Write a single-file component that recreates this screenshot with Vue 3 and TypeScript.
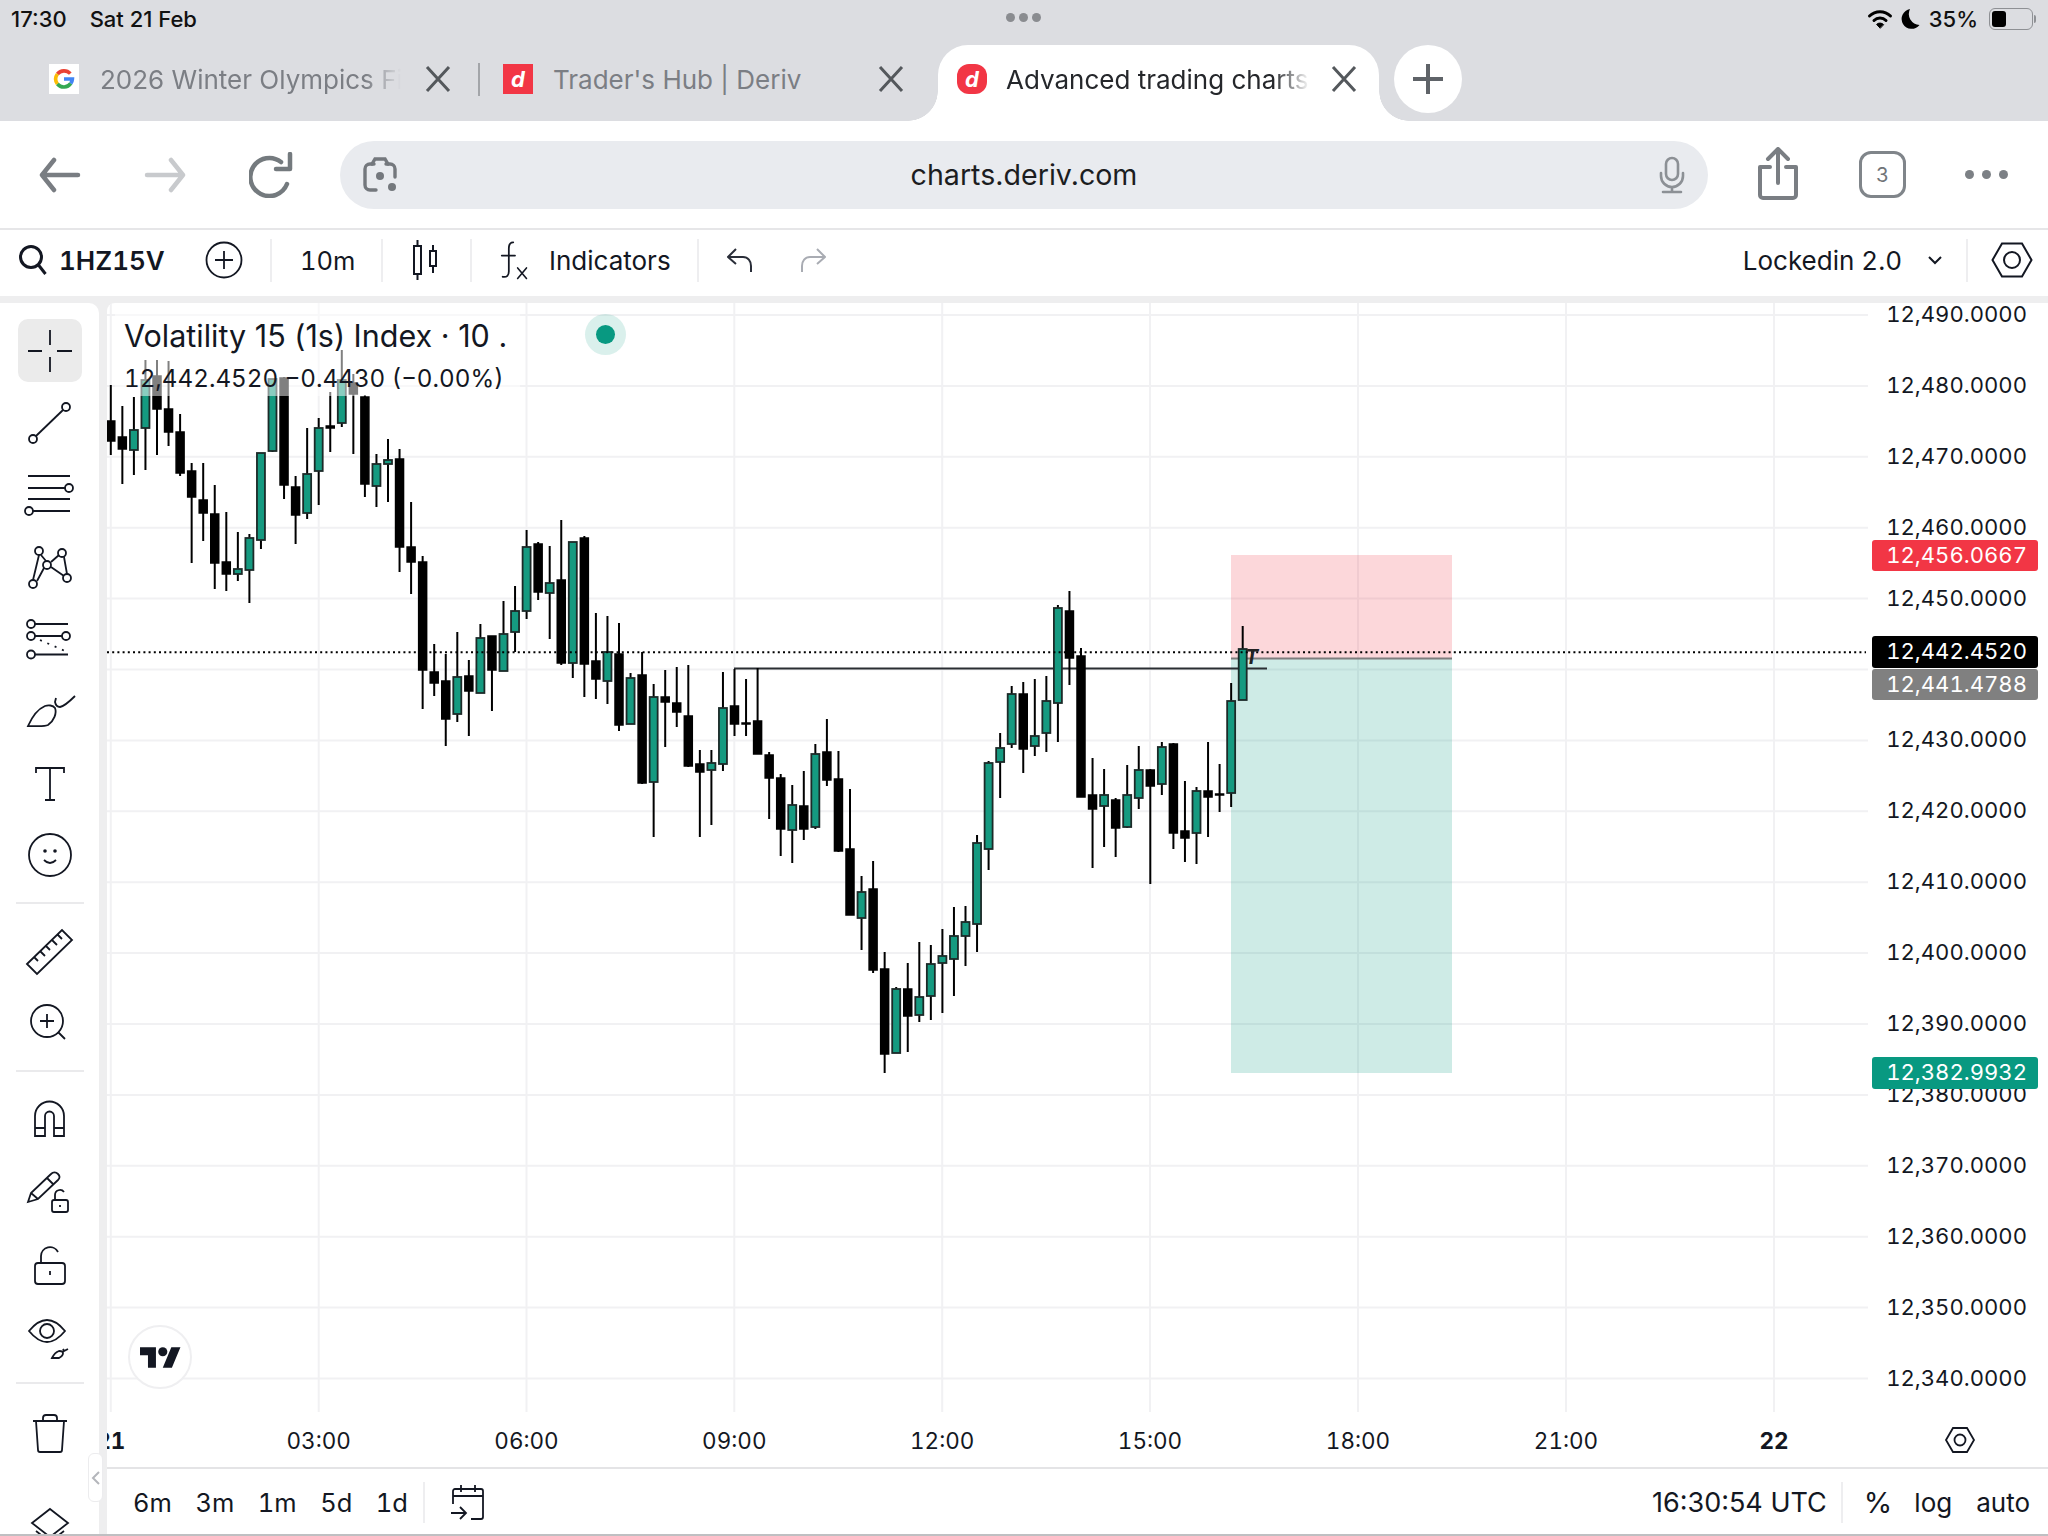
<script setup lang="ts">
type Raw = [number, number, number, number, 0 | 1]

// wick top, body top, body bottom, wick bottom, up(1)/down(0), in page pixels
const raw: Raw[] = [
  [385,421,441,455,0],[406,437,449,484,0],[397,430,450,475,1],[360,380,428,470,1],[360,376,409,455,0],
  [361,409,432,446,0],[414,432,473,476,0],[463,471,497,563,0],[463,500,513,541,0],[485,514,563,589,0],
  [512,562,574,591,0],[532,569,574,581,1],[534,538,570,603,1],[453,453,540,549,1],[379,379,451,452,1],
  [377,378,485,499,0],[476,487,515,544,0],[428,474,513,519,1],[418,428,471,505,1],[392,426,428,452,0],
  [350,380,423,427,1],[374,383,394,454,0],[395,397,484,497,0],[454,464,486,507,1],[439,460,464,502,1],
  [449,459,547,572,0],[502,547,562,594,0],[556,562,670,709,0],[644,672,683,696,0],[654,681,719,746,0],
  [632,677,714,722,1],[660,676,691,736,0],[624,638,693,693,1],[636,636,670,711,0],[601,634,671,671,1],
  [586,611,632,652,1],[530,547,611,619,1],[542,544,592,600,0],[546,583,593,639,1],[520,580,663,665,0],
  [542,542,663,678,1],[536,538,664,697,0],[613,661,679,699,0],[616,652,681,704,1],[623,654,725,731,0],
  [673,678,724,724,1],[652,675,783,784,0],[684,697,782,837,1],[670,697,702,747,0],[667,703,712,727,0],
  [665,716,766,767,0],[750,764,772,837,0],[750,763,770,825,1],[672,708,764,771,1],[669,706,724,736,0],
  [679,723,724,736,0],[668,721,754,754,0],[752,755,778,819,0],[774,778,829,856,0],[785,805,830,863,1],
  [771,806,829,840,0],[744,754,827,829,1],[719,752,780,786,0],[751,779,851,852,0],[789,849,915,915,0],
  [876,892,918,950,1],[861,889,970,973,0],[952,969,1054,1073,0],[987,989,1053,1053,1],[963,989,1016,1052,0],
  [942,997,1015,1022,1],[945,964,996,1020,1],[929,956,963,1013,1],[907,936,959,996,1],[906,922,936,966,1],
  [835,843,924,952,1],[761,763,849,870,1],[733,748,762,798,1],[686,694,744,748,1],[682,694,749,773,0],
  [679,736,746,756,1],[676,701,733,752,1],[605,608,703,742,1],[591,611,658,685,0],[648,656,797,797,0],
  [758,795,809,868,0],[769,795,806,847,1],[798,800,828,857,0],[765,795,827,828,1],[746,770,798,809,1],
  [769,770,786,884,0],[742,747,784,795,1],[743,744,833,849,0],[781,831,838,862,0],[787,791,833,864,1],
  [742,791,797,837,0],[764,794,795,812,0],[683,701,793,807,1],[626,649,700,700,1],
]

const candles = raw.map((c, i) => ({
  x: 110.8 + 11.55 * i,
  wickTop: c[0],
  top: c[1],
  height: Math.max(c[2] - c[1], 1),
  wickBot: c[3],
  up: c[4] === 1,
}))

const priceRows = Array.from({ length: 16 }, (_, i) => ({
  y: 315 + 70.9 * i,
  label: `12,${490 - i * 10}.0000`,
}))
// 12,440 sits behind the last-price tags
const priceLabels = priceRows.filter((r) => r.label !== '12,440.0000')

const timeLabels = [
  { x: 110.8, label: '21', bold: true },
  { x: 318.7, label: '03:00', bold: false },
  { x: 526.5, label: '06:00', bold: false },
  { x: 734.3, label: '09:00', bold: false },
  { x: 942.2, label: '12:00', bold: false },
  { x: 1150, label: '15:00', bold: false },
  { x: 1358, label: '18:00', bold: false },
  { x: 1566, label: '21:00', bold: false },
  { x: 1774, label: '22', bold: true },
]

const priceTags = [
  { y: 540, h: 31, fill: '#f23645', label: '12,456.0667' },
  { y: 636, h: 32, fill: '#000000', label: '12,442.4520' },
  { y: 669, h: 31, fill: '#808080', label: '12,441.4788' },
  { y: 1057, h: 32, fill: '#089981', label: '12,382.9932' },
]

const ranges = ['6m', '3m', '1m', '5d', '1d']
</script>

<template>
  <div class="page">
    <header class="browser-top">
      <div class="status-bar">
        <span class="clock">17:30</span>
        <span class="date">Sat 21 Feb</span>
        <span class="centre-dots"><i></i><i></i><i></i></span>
        <span class="status-right">
          <svg width="26" height="22" viewBox="0 0 26 22" fill="none" stroke="#000" stroke-width="3" stroke-linecap="round">
            <path d="M2.5 8a15 15 0 0 1 21 0" />
            <path d="M7 12.5a8.5 8.5 0 0 1 12 0" />
            <path d="M13 20l-3.4-3.6a4.8 4.8 0 0 1 6.8 0z" fill="#000" stroke-width="1" />
          </svg>
          <svg class="moon" width="20" height="24" viewBox="0 0 20 24">
            <path d="M9 2a10 10 0 1 0 9.5 16A11 11 0 0 1 9 2z" fill="#000" />
          </svg>
          <span class="batt-pct">35%</span>
          <span class="battery"><i></i></span>
          <span class="battery-cap"></span>
        </span>
      </div>

      <div class="tab-row">
        <div class="tab tab-first">
          <svg class="favicon" width="30" height="30" viewBox="0 0 30 30">
            <rect width="30" height="30" fill="#fff" />
            <g fill="none" stroke-width="3.6">
              <path d="M21.3 9.6A8.5 8.5 0 0 0 8.4 10" stroke="#ea4335" />
              <path d="M8.4 10a8.5 8.5 0 0 0 0 10" stroke="#fbbc05" />
              <path d="M8.4 20a8.5 8.5 0 0 0 13.4-.6" stroke="#34a853" />
              <path d="M21.8 19.4A8.5 8.5 0 0 0 23.4 15H15" stroke="#4285f4" />
            </g>
          </svg>
          <span class="tab-title fade">2026 Winter Olympics Finals</span>
          <svg class="tab-close" width="28" height="28" viewBox="0 0 28 28"><path d="M3 2l22 24M25 2L3 26" /></svg>
        </div>
        <span class="tab-sep"></span>
        <div class="tab tab-second">
          <span class="deriv-icon">d</span>
          <span class="tab-title">Trader's Hub | Deriv</span>
          <svg class="tab-close" width="28" height="28" viewBox="0 0 28 28"><path d="M3 2l22 24M25 2L3 26" /></svg>
        </div>
        <div class="tab tab-active">
          <span class="deriv-icon round">d</span>
          <span class="tab-title fade">Advanced trading charts</span>
          <svg class="tab-close" width="28" height="28" viewBox="0 0 28 28"><path d="M3 2l22 24M25 2L3 26" /></svg>
        </div>
        <button class="new-tab">
          <svg width="34" height="34" viewBox="0 0 34 34"><path d="M17 2v30M2 17h30" stroke="#5f6368" stroke-width="4" /></svg>
        </button>
      </div>
    </header>

    <div class="url-row">
      <svg class="nav-icon" width="42" height="36" viewBox="0 0 42 36" fill="none" stroke="#797d82" stroke-width="4.5" stroke-linecap="round" stroke-linejoin="round">
        <path d="M39 18H3M15 3L3 18l12 15" />
      </svg>
      <svg class="nav-icon" width="42" height="36" viewBox="0 0 42 36" fill="none" stroke="#c8cacd" stroke-width="4.5" stroke-linecap="round" stroke-linejoin="round">
        <path d="M3 18h36M27 3l12 15-12 15" />
      </svg>
      <svg class="nav-icon" width="44" height="46" viewBox="0 0 44 46" fill="none" stroke="#747a7e" stroke-width="4.5" stroke-linecap="round">
        <path d="M38 32a19 19 0 1 1-6-22" />
        <path d="M41 2v15H27" stroke-linejoin="round" />
      </svg>
      <div class="url-field">
        <svg class="lens" width="36" height="38" viewBox="0 0 36 38" fill="none" stroke="#74787d" stroke-width="3.4" stroke-linecap="round">
          <path d="M10 8l3-5h10l3 5" />
          <path d="M12 8H8a5 5 0 0 0-5 5v16a5 5 0 0 0 5 5h6M24 8h4a5 5 0 0 1 5 5v8" />
          <circle cx="18" cy="20" r="4" fill="#74787d" stroke="none" />
          <circle cx="30" cy="31" r="4" fill="#74787d" stroke="none" />
        </svg>
        <span class="url-text">charts.deriv.com</span>
        <svg class="mic" width="28" height="38" viewBox="0 0 28 38" fill="none" stroke="#8c9095" stroke-width="2.6" stroke-linecap="round">
          <rect x="8" y="2" width="12" height="22" rx="6" />
          <path d="M3 17v3a11 11 0 0 0 22 0v-3M14 31v5M5 36h18" />
        </svg>
      </div>
      <svg class="share" width="42" height="54" viewBox="0 0 42 54" fill="none" stroke="#7a7e83" stroke-width="4" stroke-linecap="round" stroke-linejoin="round">
        <path d="M21 36V3M11 12l10-10 10 10" />
        <path d="M13 20H3v28a3 3 0 0 0 3 3h30a3 3 0 0 0 3-3V20H29" />
      </svg>
      <span class="tab-count">3</span>
      <span class="more-dots"><i></i><i></i><i></i></span>
    </div>

    <div class="chart-toolbar">
      <svg class="t-search" width="30" height="32" viewBox="0 0 30 32" fill="none" stroke="#131722" stroke-width="3">
        <circle cx="13" cy="13" r="10.5" />
        <path d="M20.5 21l7 9" />
      </svg>
      <span class="symbol">1HZ15V</span>
      <svg class="t-add" width="38" height="38" viewBox="0 0 38 38" fill="none" stroke="#131722" stroke-width="1.8">
        <circle cx="19" cy="19" r="17.5" />
        <path d="M19 10v18M10 19h18" />
      </svg>
      <span class="t-sep sep-a"></span>
      <span class="interval">10m</span>
      <span class="t-sep sep-b"></span>
      <svg class="t-candles" width="26" height="40" viewBox="0 0 26 40" fill="none" stroke="#131722" stroke-width="2">
        <rect x="2" y="6" width="7" height="28" />
        <path d="M5.5 0v6M5.5 34v6" />
        <rect x="18" y="11" width="6" height="15" />
        <path d="M21 5v6M21 26v7" />
      </svg>
      <span class="t-sep sep-c"></span>
      <svg class="t-fx" width="30" height="44" viewBox="0 0 34 44" fill="none" stroke="#131722" stroke-width="2" stroke-linecap="round">
        <path d="M15 2c-4 0-5 3-5 7v26c0 4-2 7-7 6" />
        <path d="M2 17h15" />
        <path d="M20 31l10 12M30 31L20 43" stroke-width="1.8" />
      </svg>
      <span class="indicators">Indicators</span>
      <span class="t-sep sep-d"></span>
      <svg class="t-undo" width="28" height="26" viewBox="0 0 28 26" fill="none" stroke="#2a2e39" stroke-width="2" stroke-linejoin="round">
        <path d="M10 2L2 10l8 7" />
        <path d="M2 10h15c5 0 8 4 8 9v6" />
      </svg>
      <svg class="t-redo" width="28" height="26" viewBox="0 0 28 26" fill="none" stroke="#a9acb3" stroke-width="2" stroke-linejoin="round">
        <path d="M18 2l8 8-8 7" />
        <path d="M26 10H11c-5 0-8 4-8 9v6" />
      </svg>
      <span class="layout-name">Lockedin 2.0</span>
      <svg class="t-chev" width="16" height="10" viewBox="0 0 16 10" fill="none" stroke="#131722" stroke-width="2"><path d="M2 2l6 6 6-6" /></svg>
      <span class="t-sep sep-e"></span>
      <svg class="t-hex" width="42" height="36" viewBox="0 0 42 36" fill="none" stroke="#131722" stroke-width="2">
        <path d="M1.5 18L11 1.5h20L40.5 18 31 34.5H11z" />
        <circle cx="21" cy="18" r="8" />
      </svg>
    </div>

    <div class="workspace">
      <aside class="drawing-tools">
        <div class="tool active">
          <svg width="64" height="64" viewBox="0 0 64 64"><path d="M32 11v15M32 38v15M10 32h14M39 32h15" /></svg>
        </div>
        <div class="tool">
          <svg width="64" height="64" viewBox="0 0 64 64"><path d="M18 45L45 19" /><circle cx="48" cy="16" r="4" /><circle cx="15" cy="48" r="4" /></svg>
        </div>
        <div class="tool">
          <svg width="64" height="64" viewBox="0 0 64 64"><path d="M10 13h42M10 25h37M10 36h42M15 48h37" /><circle cx="51" cy="25" r="4" /><circle cx="11" cy="48" r="4" /></svg>
        </div>
        <div class="tool">
          <svg width="64" height="64" viewBox="0 0 64 64"><path d="M21 20l-6 25M23 20l5 6M19 46l7-13M33 27l8-7M46 22l3 17M33 32l13 9" /><circle cx="21" cy="16" r="4" /><circle cx="44" cy="18" r="4" /><circle cx="29" cy="30" r="4" /><circle cx="15" cy="49" r="4" /><circle cx="49" cy="43" r="4" /></svg>
        </div>
        <div class="tool">
          <svg width="64" height="64" viewBox="0 0 64 64"><path d="M17 17h33M17 29h27M17 47.500h33" /><path d="M22 33l25 11" stroke-dasharray="2 6" /><circle cx="13" cy="17" r="4" /><circle cx="13" cy="29" r="4" /><circle cx="48" cy="29" r="4" /><circle cx="13" cy="47.500" r="4" /></svg>
        </div>
        <div class="tool">
          <svg width="64" height="64" viewBox="0 0 64 64"><path d="M10 47c4-9 10-17 17-20 3-1 8-1 10 2 2 5-1 13-7 17-4 2-12 1-20 1z" /><path d="M38 19l-1 4q1 5 5 5 5-1 15-11" /></svg>
        </div>
        <div class="tool">
          <svg width="64" height="64" viewBox="0 0 64 64"><path d="M18 22v-5h28v5M32 17v32M27 49h10" /></svg>
        </div>
        <div class="tool">
          <svg width="64" height="64" viewBox="0 0 64 64"><circle cx="32" cy="32" r="21" /><path d="M26 37q6 6 12 0" /><circle class="solid" cx="27" cy="28" r="1.800" /><circle class="solid" cx="37" cy="28" r="1.800" /></svg>
        </div>
        <span class="tool-sep"></span>
        <div class="tool">
          <svg width="64" height="64" viewBox="0 0 64 64"><path d="M9 45L44 11l10 10-35 34zM16 38l4 4M22 32l5 5M28 27l4 4M34 21l5 5M40 16l4 4" /></svg>
        </div>
        <div class="tool">
          <svg width="64" height="64" viewBox="0 0 64 64"><circle cx="29" cy="30" r="16" /><path d="M29 23v14M22 30h14M40 41l7 7" /></svg>
        </div>
        <span class="tool-sep"></span>
        <div class="tool">
          <svg width="64" height="64" viewBox="0 0 64 64"><path d="M17 49V29a14.500 14.500 0 0 1 29 0v20H36V29a4.500 4.500 0 0 0-9 0v20zM17 41h10M36 41h10" /></svg>
        </div>
        <div class="tool">
          <svg width="64" height="64" viewBox="0 0 64 64"><path d="M10 43l3-9 20-19c2-2 5-2 7 0s2 4 0 6L20 40zM13 34l7 6M29 19l7 7" /><rect x="34" y="41" width="16" height="12" rx="2" /><path d="M37 41v-5a5 5 0 0 1 9-3" /><path d="M42 46v2" /></svg>
        </div>
        <div class="tool">
          <svg width="64" height="64" viewBox="0 0 64 64"><rect x="17" y="32" width="30" height="21" rx="3" /><path d="M23 32v-7a9 9 0 0 1 17-4" /><path d="M32 40v4" stroke-width="3.500" /></svg>
        </div>
        <div class="tool">
          <svg width="64" height="64" viewBox="0 0 64 64"><path d="M11 28q18-22 36 0-18 22-36 0z" /><circle cx="29" cy="28" r="7" /><path d="M34 55c2-4 4-6 7-7 2 0 4 0 4 2 0 3-2 4-4 5zM45 46l1 2 4-2" stroke-width="1.400" /></svg>
        </div>
        <span class="tool-sep sep-last"></span>
        <div class="tool">
          <svg width="64" height="64" viewBox="0 0 64 64"><path d="M15 20h34M18 20l2 29q0 2 2 2h20q2 0 2-2l2-29M25 20v-3q0-3 3-3h8q3 0 3 3v3" /></svg>
        </div>
        <div class="tool tool-cut">
          <svg width="64" height="64" viewBox="0 0 64 64"><path d="M32 18L50 32 32 46 14 32zM18 40l14 11 14-11" /></svg>
        </div>
      </aside>

      <button class="collapse">
        <svg width="10" height="16" viewBox="0 0 10 16" fill="none" stroke="#b4b6bb" stroke-width="2"><path d="M8 2L2 8l6 6" /></svg>
      </button>

      <section class="chart-area">
        <div class="chart-pane">
          <svg class="chart" width="1941" height="1164" viewBox="107 303 1941 1164">
            <g class="grid">
              <line v-for="r in priceRows" :key="r.label" x1="107" x2="1868" :y1="r.y" :y2="r.y" />
              <line v-for="t in timeLabels" :key="t.x" :x1="t.x" :x2="t.x" y1="303" y2="1412" />
            </g>

            <rect x="1231" y="555" width="221" height="104" fill="#f23645" fill-opacity="0.2" />
            <rect x="1231" y="659" width="221" height="414" fill="#089981" fill-opacity="0.2" />
            <line x1="1231" x2="1452" y1="658.500" y2="658.500" stroke="#7d7d7d" stroke-width="2" />

            <line x1="734" x2="1267" y1="668.500" y2="668.500" stroke="#2a2e33" stroke-width="2" />

            <g v-for="(c, i) in candles" :key="i">
              <line class="wick" :x1="c.x" :x2="c.x" :y1="c.wickTop" :y2="c.wickBot" />
              <rect class="body" :class="{ up: c.up }" :x="c.x - 4" :y="c.top" width="8" :height="c.height" />
            </g>

            <line x1="107" x2="1866" y1="652.300" y2="652.300" class="last-line" />
            <text x="1245" y="664" class="entry-mark">T</text>

            <g class="prices">
              <text v-for="r in priceLabels" :key="r.label" x="2027" :y="r.y + 7">{{ r.label }}</text>
            </g>
            <g v-for="t in priceTags" :key="t.label">
              <rect x="1872" :y="t.y" width="166" :height="t.h" rx="3" :fill="t.fill" />
              <text x="2027" :y="t.y + t.h / 2 + 7" class="tag-text">{{ t.label }}</text>
            </g>

            <g class="times">
              <text
                v-for="t in timeLabels"
                :key="t.label"
                :x="t.x"
                y="1449"
                :class="{ bold: t.bold }"
              >{{ t.label }}</text>
            </g>
            <g fill="none" stroke="#131722" stroke-width="1.800">
              <path d="M1946 1440l7-12h14l7 12-7 12h-14z" />
              <circle cx="1960" cy="1440" r="5.500" />
            </g>
          </svg>

          <div class="legend">
            <div class="legend-title">Volatility 15 (1s) Index · 10 .</div>
            <div class="legend-values">12,442.4520 −0.4430 (−0.00%)</div>
          </div>
          <span class="live-dot"><i></i></span>
          <div class="tv-badge">
            <svg width="41" height="21" viewBox="0 4 36 18">
              <path d="M14 22H7V11H0V4h14v18zM28 22h-8l7.500-18h8L28 22z" fill="#131722" />
              <circle cx="20" cy="8" r="4" fill="#131722" />
            </svg>
          </div>
        </div>

        <footer class="bottom-bar">
          <span v-for="r in ranges" :key="r" class="range">{{ r }}</span>
          <span class="b-sep sep-left"></span>
          <svg class="calendar" width="36" height="36" viewBox="0 0 36 36" fill="none" stroke="#131722" stroke-width="1.800">
            <path d="M3 19V6a2 2 0 0 1 2-2h26a2 2 0 0 1 2 2v26a2 2 0 0 1-2 2H21M3 11h30M11 0v7M25 0v7" />
            <path d="M1 28h15M10 22l6 6-6 6" />
          </svg>
          <span class="utc">16:30:54 UTC</span>
          <span class="b-sep sep-right"></span>
          <span class="pct">%</span>
          <span class="log">log</span>
          <span class="auto">auto</span>
        </footer>
      </section>
    </div>
  </div>
</template>

<style>
html, body { margin: 0; background: #fff; }
</style>

<style scoped>
.page { width: 2048px; height: 1536px; overflow: hidden; display: flex; flex-direction: column; font-family: Inter, "Liberation Sans", sans-serif; color: #131722; background: #fff; font-variant-numeric: tabular-nums; }
svg { display: block; flex: none; }

.browser-top { height: 121px; background: #dcdde1; flex: none; }
.status-bar { height: 45px; display: flex; align-items: center; padding: 0 12px 8px 11px; box-sizing: border-box; font-size: 22px; font-weight: 500; color: #111; font-variant-numeric: normal; }
.clock { margin-right: 23px; }
.centre-dots { position: absolute; left: 1006px; top: 13px; display: flex; gap: 4px; }
.centre-dots i { width: 9px; height: 9px; border-radius: 50%; background: #8a8c90; }
.status-right { margin-left: auto; display: flex; align-items: center; }
.moon { margin-left: 8px; }
.batt-pct { margin-left: 8px; margin-right: 11px; }
.battery { width: 44px; height: 22px; border: 1.5px solid #8e9094; border-radius: 6px; box-sizing: border-box; padding: 2px; display: block; }
.battery i { display: block; width: 14px; height: 100%; background: #000; border-radius: 3px; }
.battery-cap { width: 2px; height: 8px; background: #8e9094; margin-left: 1px; border-radius: 0 2px 2px 0; }

.tab-row { height: 76px; display: flex; align-items: stretch; position: relative; }
.tab { display: flex; align-items: center; box-sizing: border-box; height: 76px; padding-bottom: 8px; font-size: 26px; color: #7b7e84; position: relative; flex: none; font-variant-numeric: normal; }
.tab-first { width: 478px; padding-left: 49px; }
.tab-second { width: 458px; padding-left: 23px; }
.tab-active { width: 441px; padding-left: 19px; background: #fff; border-radius: 30px 30px 0 0; color: #25272b; }
.tab-active::before, .tab-active::after { content: ""; position: absolute; bottom: 0; width: 30px; height: 30px; }
.tab-active::before { left: -30px; background: radial-gradient(circle at 0 0, transparent 29.5px, #fff 30px); }
.tab-active::after { right: -30px; background: radial-gradient(circle at 100% 0, transparent 29.5px, #fff 30px); }
.tab-sep { width: 2px; height: 33px; margin-top: 18px; background: #a3a5a9; flex: none; }
.favicon { margin-right: 21px; }
.deriv-icon { width: 30px; height: 30px; background: #f23645; color: #fff; font-size: 22px; font-weight: 700; font-style: italic; display: flex; align-items: center; justify-content: center; margin-right: 20px; flex: none; }
.deriv-icon.round { border-radius: 12px; margin-right: 19px; }
.tab-title { white-space: nowrap; overflow: hidden; width: 301px; flex: none; }
.tab-active .tab-title { width: 304px; }
.tab-title.fade { -webkit-mask-image: linear-gradient(to right, #000 88%, transparent 100%); mask-image: linear-gradient(to right, #000 88%, transparent 100%); }
.tab-close { margin-left: 23px; }
.tab-close path { fill: none; stroke: #54585c; stroke-width: 3; }
.tab-active .tab-close { margin-left: 20px; }
.new-tab { width: 68px; height: 68px; border-radius: 50%; border: 0; background: #fff; margin-left: 15px; display: flex; align-items: center; justify-content: center; padding: 0; position: relative; z-index: 1; }

.url-row { height: 107px; display: flex; align-items: center; flex: none; position: relative; border-bottom: 2px solid #e6e6e8; box-sizing: content-box; }
.nav-icon:nth-child(1) { margin-left: 39px; }
.nav-icon:nth-child(2) { margin-left: 63px; }
.nav-icon:nth-child(3) { margin-left: 63px; }
.url-field { margin-left: 47px; width: 1368px; height: 68px; border-radius: 34px; background: #e9ebef; display: flex; align-items: center; position: relative; }
.lens { margin-left: 22px; }
.url-text { position: absolute; left: 0; right: 0; text-align: center; font-size: 28.6px; color: #1c1d1f; font-variant-numeric: normal; }
.mic { margin-left: auto; margin-right: 22px; }
.share { margin-left: 49px; margin-top: -1px; }
.tab-count { margin-left: 60px; width: 47px; height: 47px; border: 3.5px solid #80858a; border-radius: 12px; box-sizing: border-box; display: flex; align-items: center; justify-content: center; font-size: 20px; color: #707478; }
.more-dots { margin-left: 59px; display: flex; gap: 8px; }
.more-dots i { width: 9px; height: 9px; border-radius: 50%; background: #7c8085; }

.chart-toolbar { height: 66px; display: flex; align-items: center; flex: none; position: relative; font-size: 26px; padding-bottom: 6px; box-sizing: border-box; }
.t-search { margin-left: 18px; }
.symbol { margin-left: 11px; font-weight: 600; font-size: 26px; width: 107px; white-space: nowrap; }
.t-add { margin-left: 39px; }
.t-sep { width: 2px; height: 43px; background: #eeeef0; flex: none; }
.sep-a { margin-left: 27px; }
.interval { margin-left: 28px; width: 53px; font-size: 25.5px; white-space: nowrap; }
.sep-b { margin-left: 28px; }
.t-candles { margin-left: 29px; }
.sep-c { margin-left: 32px; }
.t-fx { margin-left: 28px; }
.indicators { margin-left: 19px; width: 121px; }
.sep-d { margin-left: 27px; }
.t-undo { margin-left: 27px; }
.t-redo { margin-left: 45px; }
.layout-name { margin-left: auto; }
.t-chev { margin-left: 25px; }
.sep-e { margin-left: 23px; }
.t-hex { margin-left: 23px; margin-right: 15px; }

.workspace { flex: 1; min-height: 0; background: #eeeeef; padding-top: 7px; display: flex; position: relative; border-bottom: 2px solid #bfbfc2; }
.drawing-tools { width: 99px; background: #fff; border-radius: 0 10px 0 0; padding-top: 12px; display: flex; flex-direction: column; align-items: center; flex: none; overflow: hidden; }
.tool { width: 64px; height: 72px; display: flex; align-items: center; justify-content: center; flex: none; position: relative; }
.tool svg { overflow: visible; }
.tool svg path, .tool svg circle, .tool svg rect { fill: none; stroke: #131722; stroke-width: 1.8; }
.tool svg .solid { fill: #131722; stroke: none; }
.tool.active::before { content: ""; position: absolute; left: 0; right: 0; top: 4px; bottom: 5px; background: #ebebeb; border-radius: 10px; }
.tool.active svg { position: relative; }
.tool-sep { width: 68px; height: 2px; background: #eaeaec; margin: 11px 0; flex: none; }
.sep-last { margin-bottom: 13px; }
.tool-cut { margin-top: 18px; }
.collapse { position: absolute; left: 88px; top: 1157px; width: 15px; height: 49px; border: 1px solid #ececee; border-radius: 6px; background: #fff; padding: 0; display: flex; align-items: center; justify-content: center; z-index: 2; }

.chart-area { margin-left: 8px; flex: 1; min-width: 0; background: #fff; border-radius: 8px 0 0 0; display: flex; flex-direction: column; overflow: hidden; }
.chart-pane { height: 1164px; position: relative; overflow: hidden; flex: none; border-bottom: 2px solid #e4e4e6; box-sizing: content-box; }
.chart { display: block; }
.grid line { stroke: #f1f1f3; stroke-width: 2; }
.wick { stroke: #000; stroke-width: 2; }
.body { fill: #000; stroke: #000; stroke-width: 1.5; }
.body.up { fill: #159a80; stroke: #1c2a28; stroke-width: 1.8; }
.last-line { stroke: #000; stroke-width: 2; stroke-dasharray: 2 3.2; }
.entry-mark { font-size: 20px; font-style: italic; font-weight: 700; fill: #222; }
.prices text { font-size: 22.1px; text-anchor: end; fill: #131722; }
.tag-text { font-size: 22.1px; text-anchor: end; fill: #fff; }
.times text { font-size: 22.5px; text-anchor: middle; fill: #131722; }
.times text.bold { font-weight: 700; }

.legend { position: absolute; left: 8px; top: 0; width: 405px; height: 93px; background: rgba(255, 255, 255, 0.5); padding: 16px 0 0 9px; box-sizing: border-box; }
.legend-title { font-size: 30.5px; line-height: 34px; white-space: nowrap; color: #131722; font-variant-numeric: normal; }
.legend-values { font-size: 24.2px; line-height: 30px; margin-top: 11px; white-space: nowrap; color: #131722; }
.live-dot { position: absolute; left: 478px; top: 11px; width: 41px; height: 41px; border-radius: 50%; background: rgba(8, 153, 129, 0.15); display: flex; align-items: center; justify-content: center; }
.live-dot i { width: 19px; height: 19px; border-radius: 50%; background: #089981; }
.tv-badge { position: absolute; left: 21px; top: 1022px; width: 64px; height: 64px; box-sizing: border-box; border: 2px solid #efeff1; border-radius: 50%; background: #fff; display: flex; align-items: center; justify-content: center; }

.bottom-bar { flex: 1; display: flex; align-items: center; font-size: 25.5px; padding-left: 26px; padding-top: 2px; }
.range { margin-right: 23.5px; }
.b-sep { width: 2px; height: 41px; background: #eeeef0; flex: none; }
.sep-left { margin-left: -8px; }
.calendar { margin-left: 25px; }
.utc { margin-left: auto; font-size: 27px; font-variant-numeric: normal; }
.sep-right { margin-left: 14px; margin-right: 21px; }
.pct { font-size: 29px; margin-right: 22px; }
.log { margin-right: 24px; font-size: 26px; }
.auto { margin-right: 18px; font-size: 26px; }
</style>
